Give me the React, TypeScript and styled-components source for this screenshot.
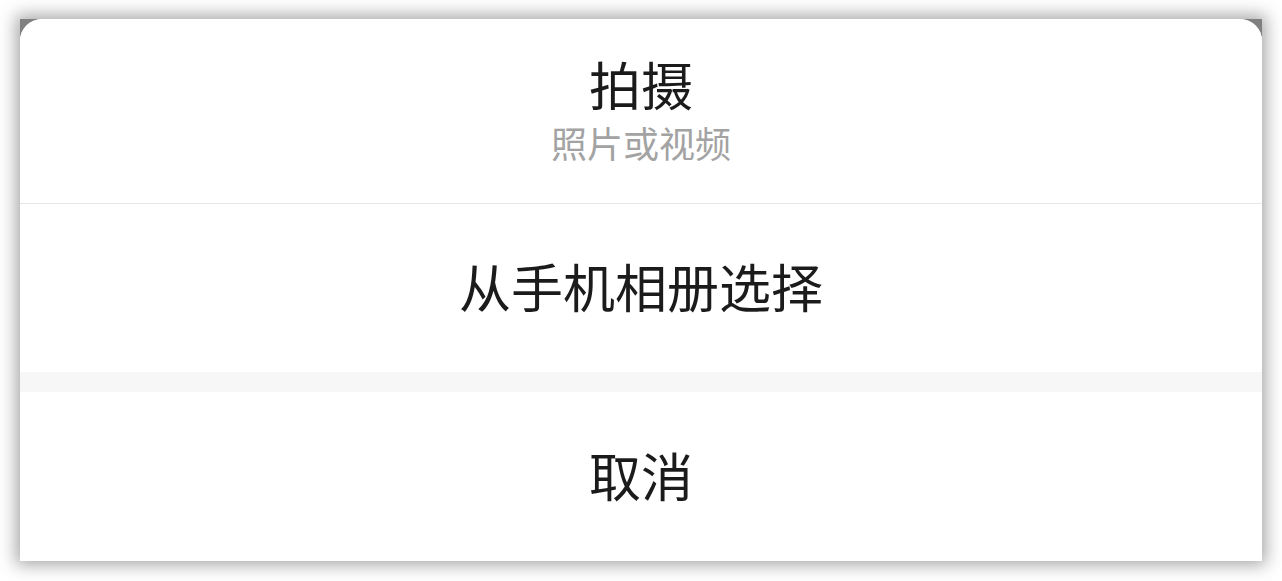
import React from 'react'
import styled, { createGlobalStyle } from 'styled-components'

const GlobalStyle = createGlobalStyle`
  html, body {
    margin: 0;
    padding: 0;
    background: #ffffff;
    font-family: "Noto Sans CJK SC", "Noto Sans", sans-serif;
  }
`

const Page = styled.div`
  padding: 19px 20px 20px;
  box-sizing: border-box;
  height: 581px;
`

const Mask = styled.div`
  height: 100%;
  background: #808080;
  box-shadow: 0 0 16px 4px rgba(0, 0, 0, 0.35);
  display: flex;
  flex-direction: column;
`

const Sheet = styled.div`
  flex: 1;
  background: #ffffff;
  border-radius: 22px 22px 0 0;
  overflow: hidden;
  display: flex;
  flex-direction: column;
`

const Option = styled.div<{ $divider?: boolean; $grow?: boolean; $lift: number }>`
  display: flex;
  flex-direction: column;
  align-items: center;
  justify-content: center;
  box-sizing: border-box;
  padding-bottom: ${(p) => p.$lift}px;
  background: #ffffff;
  border-bottom: ${(p) => (p.$divider ? '1px solid #e6e6e6' : 'none')};
  ${(p) => (p.$grow ? 'flex: 1;' : '')}
`

const Title = styled.div`
  font-size: 52px;
  line-height: 72px;
  color: #1b1b1b;
`

const Subtitle = styled.div`
  font-size: 36px;
  line-height: 44px;
  color: #a3a3a3;
`

const Gap = styled.div`
  height: 20px;
  background: #f7f7f7;
`

export default function App() {
  return (
    <>
      <GlobalStyle />
      <Page>
        <Mask>
          <Sheet>
            <Option $divider $lift={10} style={{ height: 185 }}>
              <Title>拍摄</Title>
              <Subtitle>照片或视频</Subtitle>
            </Option>
            <Option $lift={5} style={{ height: 168 }}>
              <Title>从手机相册选择</Title>
            </Option>
            <Gap />
            <Option $grow $lift={4}>
              <Title>取消</Title>
            </Option>
          </Sheet>
        </Mask>
      </Page>
    </>
  )
}
